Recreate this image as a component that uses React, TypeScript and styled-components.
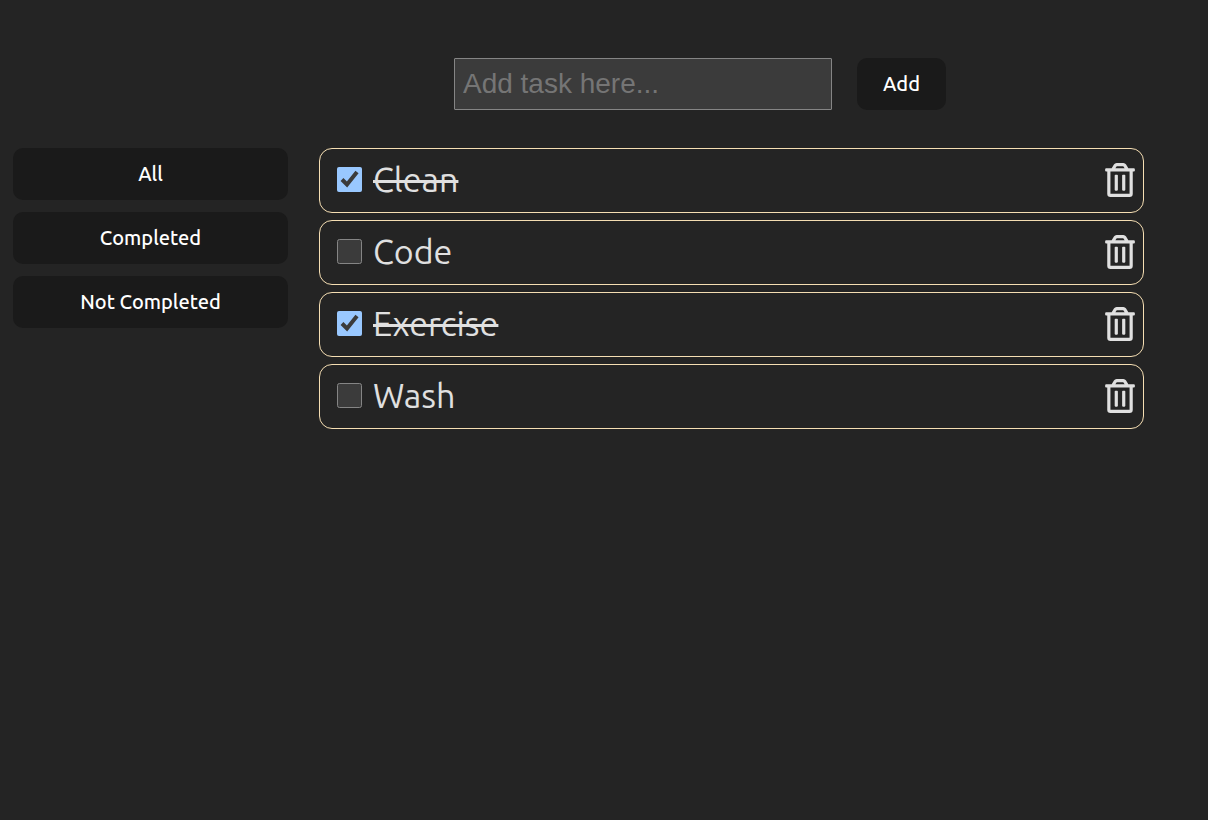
import React, { useState } from "react";
import styled, { createGlobalStyle } from "styled-components";
import { FaRegTrashAlt } from "react-icons/fa";

const GlobalStyle = createGlobalStyle`
  :root {
    color-scheme: dark;
    background: #242424;
    color: #e0e0e0;
    font-family: Ubuntu, "Noto Sans", "Open Sans", sans-serif;
  }
  *, *::before, *::after { box-sizing: border-box; }
  body { margin: 0; }
`;

const Page = styled.div`
  padding: 58px 64px 58px 13px;
`;

const TaskForm = styled.form`
  display: flex;
  justify-content: center;
  gap: 25px;
  margin: 0 0 38px;
  padding-left: 243px;
`;

const TaskInput = styled.input`
  width: 378px;
  height: 52px;
  padding: 0 8px;
  border: 1px solid #858585;
  border-radius: 1px;
  background: #3b3b3b;
  color: #ffffff;
  font-family: "Liberation Sans", Arial, sans-serif;
  font-size: 28px;
  &::placeholder { color: #757575; }
`;

const Button = styled.button`
  height: 52px;
  padding: 0 26px 2px;
  border: 0;
  border-radius: 10px;
  background: #1a1a1a;
  color: #ffffff;
  font-family: inherit;
  font-size: 20px;
  font-weight: 500;
  cursor: pointer;
`;

const Columns = styled.div`
  display: grid;
  grid-template-columns: minmax(0, 1fr) minmax(0, 3fr);
  gap: 31px;
  align-items: start;
`;

const Filters = styled.nav`
  display: flex;
  flex-direction: column;
  gap: 12px;
`;

const TaskList = styled.ul`
  display: flex;
  flex-direction: column;
  gap: 7px;
  margin: 0;
  padding: 0;
  list-style: none;
`;

const TaskRow = styled.li`
  display: flex;
  align-items: center;
  justify-content: space-between;
  height: 65px;
  padding: 0 8px 2px 17px;
  border: 1px solid #f5deb3;
  border-radius: 13px;
`;

const TaskLabel = styled.label<{ $done: boolean }>`
  display: flex;
  align-items: center;
  gap: 11px;
  font-size: 34px;
  line-height: 40px;
  font-weight: 400;

  span {
    padding-bottom: 2px;
    text-decoration: ${({ $done }) => ($done ? "line-through" : "none")};
    text-decoration-thickness: 3px;
  }
`;

const Checkbox = styled.input`
  width: 25px;
  height: 25px;
  margin: 0;
`;

const DeleteButton = styled.button`
  display: flex;
  padding: 0;
  border: 0;
  background: none;
  color: #e0e0e0;
  cursor: pointer;

  svg { width: 30px; height: 34px; }
`;

type Task = { id: number; name: string; done: boolean };
type Filter = "All" | "Completed" | "Not Completed";

const filters: Filter[] = ["All", "Completed", "Not Completed"];

const initialTasks: Task[] = [
  { id: 1, name: "Clean", done: true },
  { id: 2, name: "Code", done: false },
  { id: 3, name: "Exercise", done: true },
  { id: 4, name: "Wash", done: false },
];

export default function App() {
  const [tasks, setTasks] = useState(initialTasks);
  const [filter, setFilter] = useState<Filter>("All");
  const [draft, setDraft] = useState("");

  const addTask = (event: React.FormEvent) => {
    event.preventDefault();
    const name = draft.trim();
    if (!name) return;
    setTasks([...tasks, { id: Date.now(), name, done: false }]);
    setDraft("");
  };

  const toggle = (id: number) =>
    setTasks(tasks.map((t) => (t.id === id ? { ...t, done: !t.done } : t)));

  const visible = tasks.filter(
    (t) => filter === "All" || t.done === (filter === "Completed")
  );

  return (
    <Page>
      <GlobalStyle />
      <TaskForm onSubmit={addTask}>
        <TaskInput
          type="text"
          aria-label="New task"
          placeholder="Add task here..."
          value={draft}
          onChange={(e) => setDraft(e.target.value)}
        />
        <Button type="submit">Add</Button>
      </TaskForm>
      <Columns>
        <Filters aria-label="Filter tasks">
          {filters.map((name) => (
            <Button key={name} type="button" onClick={() => setFilter(name)}>
              {name}
            </Button>
          ))}
        </Filters>
        <TaskList>
          {visible.map((task) => (
            <TaskRow key={task.id}>
              <TaskLabel $done={task.done}>
                <Checkbox
                  type="checkbox"
                  checked={task.done}
                  onChange={() => toggle(task.id)}
                />
                <span>{task.name}</span>
              </TaskLabel>
              <DeleteButton
                type="button"
                aria-label={`Delete ${task.name}`}
                onClick={() => setTasks(tasks.filter((t) => t.id !== task.id))}
              >
                <FaRegTrashAlt />
              </DeleteButton>
            </TaskRow>
          ))}
        </TaskList>
      </Columns>
    </Page>
  );
}
